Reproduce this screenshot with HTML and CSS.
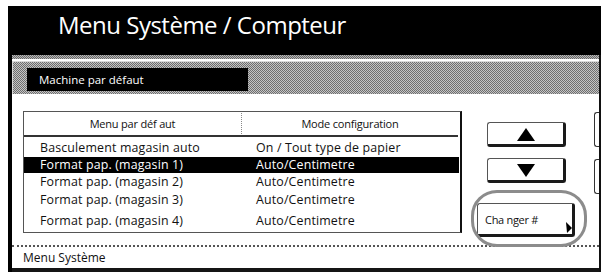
FILE: index.html
```html
<!DOCTYPE html>
<html lang="fr">
<head>
<meta charset="utf-8">
<title>Menu Système / Compteur</title>
<link rel="stylesheet" href="styles.css">
</head>
<body>
<div class="screen">
  <div class="header"><h1 class="title">Menu Système / Compteur</h1></div>
  <div class="strip"></div>
  <div class="gap"></div>
  <div class="tabbar"><div class="tab">Machine par défaut</div></div>
  <div class="content">
    <div class="table">
      <div class="thead">
        <div class="th th-left">Menu par déf aut</div>
        <div class="th th-right">Mode configuration</div>
      </div>
      <div class="rows">
        <div class="row"><span class="c1">Basculement magasin auto</span><span class="c2">On / Tout type de papier</span></div>
        <div class="row sel"><span class="c1">Format pap. (magasin 1)</span><span class="c2">Auto/Centimetre</span></div>
        <div class="row"><span class="c1">Format pap. (magasin 2)</span><span class="c2">Auto/Centimetre</span></div>
        <div class="row r4"><span class="c1">Format pap. (magasin 3)</span><span class="c2">Auto/Centimetre</span></div>
        <div class="row last"><span class="c1">Format pap. (magasin 4)</span><span class="c2">Auto/Centimetre</span></div>
      </div>
    </div>
    <div class="controls">
      <button class="btn arrow"><svg width="18" height="13" viewBox="0 0 18 13"><polygon points="9,0 18,13 0,13" fill="#000"/></svg></button>
      <button class="btn arrow down"><svg width="18" height="13" viewBox="0 0 18 13"><polygon points="0,0 18,0 9,13" fill="#000"/></svg></button>
      <div class="changer-wrap">
        <button class="btn changer">Cha nger #<svg class="corner" width="6" height="11" viewBox="0 0 6 11"><polygon points="0,0 6,6 1,11" fill="#000"/></svg></button>
        <div class="oval"></div>
      </div>
    </div>
    <div class="sidetabs">
      <div class="sidetab"></div>
      <div class="sidetab"></div>
    </div>
  </div>
  <div class="status">Menu Système</div>
</div>
</body>
</html>
```
FILE: styles.css
```css
html, body {
  margin: 0;
  padding: 0;
  background: #fff;
}
body {
  width: 601px;
  height: 279px;
  overflow: hidden;
  font-family: "Open Sans", "Noto Sans", sans-serif;
}
.screen {
  margin: 6px 0 0 8px;
  width: 587px;
  border-left: 4px solid #000;
  border-right: 2px solid #111;
  background: #fff;
}
.header {
  height: 49px;
  background: #000;
  margin-right: -2px;
  padding-left: 46px;
}
.title {
  margin: 0;
  color: #fff;
  font-weight: 400;
  font-size: 24px;
  line-height: 34px;
  padding-top: 2px;
  letter-spacing: -0.5px;
}
.strip {
  height: 4px;
  background: repeating-conic-gradient(#6a6a6a 0 25%, #b8b8b8 0 50%) 0 0 / 2px 2px;
}
.gap {
  height: 2px;
  background: #fff;
}
.tabbar {
  height: 33px;
  box-sizing: border-box;
  padding: 6px 0 0 14px;
  background: repeating-conic-gradient(#6e6e6e 0 25%, #c4c4c4 0 50%) 0 0 / 2px 2px;
  border-top: 1px solid #d8d8d8;
  border-left: 1px solid #d8d8d8;
}
.tab {
  width: 221px;
  height: 23px;
  box-sizing: border-box;
  background: #000;
  color: #fff;
  font-size: 11.5px;
  line-height: 23px;
  padding-left: 12px;
}
.content {
  height: 151px;
  display: flex;
  align-items: flex-start;
}
.table {
  margin: 17px 0 0 11px;
  width: 439px;
  height: 122px;
  box-sizing: border-box;
  border: 1px solid #555;
  border-right: 2px solid #111;
}
.thead {
  display: grid;
  grid-template-columns: 218px 1fr;
  height: 23px;
  border-bottom: 2px solid #333;
  margin-right: 2px;
}
.th {
  font-size: 11px;
  line-height: 23px;
  text-align: center;
  color: #111;
  letter-spacing: -0.2px;
}
.th-left {
  border-right: 1px dotted #888;
  margin: 1px 0 2px;
  line-height: 21px;
}
.rows {
  padding-top: 2px;
}
.row {
  display: grid;
  grid-template-columns: 219px 1fr;
  height: 17px;
  font-size: 12.4px;
  line-height: 17px;
  letter-spacing: 0.15px;
  color: #111;
}
.row .c1 { padding-left: 16px; }
.row .c2 { padding-left: 13px; }
.row.sel {
  background: #000;
  color: #fff;
  height: 16px;
  line-height: 16px;
  margin-top: 1px;
  margin-right: 1px;
}
.row.r4 {
  margin-top: 1px;
}
.row.last {
  margin-top: 4px;
}
.controls {
  margin: 28px 0 0 15px;
  display: flex;
  flex-direction: column;
  align-items: flex-start;
}
.btn {
  background: #fff;
  border: 1px solid #555;
  border-right: 3px solid #1a1a1a;
  border-bottom: 3px solid #1a1a1a;
  border-radius: 3px;
  padding: 0;
  margin: 0;
  font-family: inherit;
  box-sizing: border-box;
}
.arrow {
  width: 79px;
  height: 25px;
  margin-left: 10px;
  display: flex;
  align-items: center;
  justify-content: center;
  padding-top: 1px;
}
.arrow.down {
  margin-top: 11px;
}
.changer-wrap {
  position: relative;
  margin-top: 20px;
}
.changer {
  position: relative;
  width: 98px;
  height: 34px;
  text-align: left;
  padding-left: 7px;
  font-size: 11px;
  color: #111;
  letter-spacing: -0.3px;
}
.corner {
  position: absolute;
  right: 0;
  bottom: 1px;
}
.oval {
  position: absolute;
  left: -6px;
  top: -13px;
  width: 116px;
  height: 57px;
  box-sizing: border-box;
  border: 3px solid #8c8c8c;
  border-radius: 26px;
  pointer-events: none;
}
.sidetabs {
  margin: 18px 0 0 auto;
  display: flex;
  flex-direction: column;
  gap: 12px;
}
.sidetab {
  width: 4px;
  height: 33px;
  border: 1px solid #333;
  border-right: none;
  border-radius: 3px 0 0 3px;
}
.status {
  height: 21px;
  border-top: 2px dotted #555;
  border-bottom: 4px solid #151515;
  padding-left: 11px;
  font-size: 12px;
  line-height: 21px;
  color: #111;
}
```
